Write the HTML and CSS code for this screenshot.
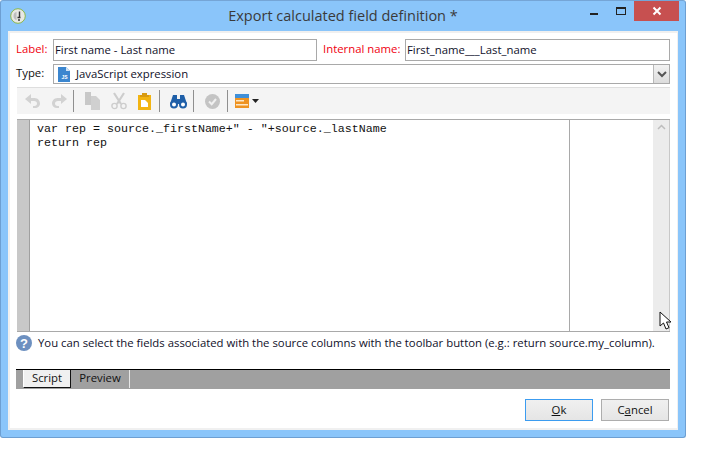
FILE: index.html
```html
<!DOCTYPE html>
<html lang="en">
<head>
<meta charset="utf-8">
<title>Export calculated field definition *</title>
<link rel="stylesheet" href="styles.css">
</head>
<body>
<div class="window">
  <header class="titlebar">
    <svg class="app-icon" width="16" height="16" viewBox="0 0 16 16"><circle cx="8" cy="8" r="7.300" fill="#e8e8e4" stroke="#8cb84a"/><path d="M3.500 8a4.500 4.500 0 0 1 3-4.200v8.400a4.500 4.500 0 0 1-3-4.200z" fill="#bdbdbd"/><path d="M9.500 3.500v5.500M7.500 9.500h3M9 11v2" stroke="#333" stroke-width="1.400" fill="none"/></svg>
    <div class="title">Export calculated field definition *</div>
    <div class="controls">
      <span class="ctl-min"></span>
      <span class="ctl-max"></span>
      <span class="ctl-close"><svg width="10" height="10" viewBox="0 0 10 10"><path d="M1.500 1.500l7 7M8.500 1.500l-7 7" stroke="#fff" stroke-width="2"/></svg></span>
    </div>
  </header>
  <main class="client">
    <div class="row row-top">
      <label class="lbl lbl-req lbl-first">Label:</label>
      <div class="field field-label">First name - Last name</div>
      <label class="lbl lbl-req lbl-internal">Internal name:</label>
      <div class="field field-internal">First_name___Last_name</div>
    </div>
    <div class="row row-type">
      <label class="lbl lbl-first">Type:</label>
      <div class="field field-type">
        <svg class="js-icon" width="12" height="15" viewBox="0 0 12 15"><path d="M0 0h8l4 4v11H0z" fill="#3b86cf"/><path d="M8 0l4 4H8z" fill="#cfe3f6"/><text x="3.400" y="12.400" class="js-text">JS</text></svg>
        <span class="type-text">JavaScript expression</span>
        <span class="combo-btn"><svg width="10" height="7" viewBox="0 0 10 7"><path d="M1 1l4 4 4-4" stroke="#555" stroke-width="2" fill="none"/></svg></span>
      </div>
    </div>
    <div class="toolbar">
      <svg class="tool" width="18" height="16" viewBox="0 0 18 16"><path d="M7 1L1 6l6 5V8h3c2 0 3 1 3 2.500S12 13 10.500 13H9v2h2c3 0 5-2 5-4.500S14 5 10.500 5H7z" fill="#d2d2d2"/></svg>
      <svg class="tool tool-redo" width="18" height="16" viewBox="0 0 18 16"><path d="M11 1l6 5-6 5V8H8c-2 0-3 1-3 2.500S6 13 7.500 13H9v2H7c-3 0-5-2-5-4.500S4 5 7.500 5H11z" fill="#d2d2d2"/></svg>
      <span class="sep sep-a"></span>
      <svg class="tool tool-copy" width="16" height="18" viewBox="0 0 16 18"><path d="M0 0h6v13H0z" fill="#c8c8c8"/><path d="M6 4h5l4 4v10H6z" fill="#d0d0d0"/></svg>
      <svg class="tool tool-cut" width="16" height="18" viewBox="0 0 16 18"><path d="M3 1l7 11M13 1L6 12" stroke="#cdcdcd" stroke-width="2.200" fill="none"/><circle cx="3.500" cy="14" r="2.600" fill="none" stroke="#cdcdcd" stroke-width="1.400"/><circle cx="12.500" cy="14" r="2.600" fill="none" stroke="#cdcdcd" stroke-width="1.400"/></svg>
      <svg class="tool tool-paste" width="13" height="18" viewBox="0 0 13 18"><path d="M0 3h13v15H0z" fill="#f2b412"/><path d="M4 3V1h5v2h2v2H2V3z" fill="#d89a10"/><path d="M3 8h4l3 3v4H3z" fill="#fff"/></svg>
      <span class="sep sep-b"></span>
      <svg class="tool tool-find" width="17" height="15" viewBox="0 0 17 15"><path d="M3 1h4v4h3V1h4l3 9H0z" fill="#1f5fa8"/><circle cx="4" cy="10.500" r="3" fill="#fff" stroke="#1f5fa8" stroke-width="2"/><circle cx="13" cy="10.500" r="3" fill="#fff" stroke="#1f5fa8" stroke-width="2"/></svg>
      <span class="sep sep-c"></span>
      <svg class="tool tool-check" width="15" height="15" viewBox="0 0 15 15"><circle cx="7.500" cy="7.500" r="7.500" fill="#c4c4c4"/><path d="M4 7.500l2.700 2.700L11 5" stroke="#f0f0f0" stroke-width="2" fill="none"/></svg>
      <span class="sep sep-d"></span>
      <svg class="tool tool-fields" width="14" height="14" viewBox="0 0 14 14"><path d="M0 0h14v14H0z" fill="#ee9322"/><path d="M0 0h14v4H0z" fill="#3f8fd8"/><path d="M1 6h8v1.500H1zM1 10h12v1.500H1z" fill="#fde8c8"/></svg>
      <svg class="tool-arrow" width="7" height="4" viewBox="0 0 7 4"><path d="M0 0h7L3.500 4z" fill="#222"/></svg>
    </div>
    <div class="editor">
      <div class="gutter"></div>
      <pre class="code">var rep = source._firstName+" - "+source._lastName
return rep</pre>
      <div class="side"></div>
      <div class="scroll"><svg width="9" height="6" viewBox="0 0 9 6"><path d="M1 5l3.500-3.500L8 5" stroke="#bdbdbd" stroke-width="1.500" fill="none"/></svg></div>
    </div>
    <div class="help">
      <svg width="16" height="16" viewBox="0 0 16 16"><circle cx="8" cy="8" r="8" fill="#6d90c0"/><text x="8" y="12.500" class="help-q">?</text></svg>
      <span class="help-text">You can select the fields associated with the source columns with the toolbar button (e.g.: return source.my_column).</span>
    </div>
    <div class="tabs">
      <span class="tab tab-on">Script</span>
      <span class="tab tab-off">Preview</span>
    </div>
    <div class="buttons">
      <button class="btn btn-default"><u>O</u>k</button>
      <button class="btn">C<u>a</u>ncel</button>
    </div>
  </main>
</div>
<svg class="cursor" width="14" height="20" viewBox="0 0 14 20"><path d="M1 1v14l3.500-3 2.500 6 3-1.300L7.500 11H12z" fill="#fff" stroke="#111" stroke-width="1"/></svg>
</body>
</html>
```
FILE: styles.css
```css
* { box-sizing: border-box; }
html, body { margin: 0; padding: 0; background: #fff; }
body {
  width: 704px; height: 476px; position: relative; overflow: hidden;
  font-family: "Open Sans", "Noto Sans", sans-serif; font-size: 11.350px; color: #111;
}
.window {
  width: 686px; height: 438px; background: #8ac5fa;
  border: 1px solid #6d9fd2; border-top-color: #75a5d6; border-radius: 3px;
  display: flex; flex-direction: column; padding: 0 7px 7px;
}
.titlebar { height: 30px; display: flex; align-items: flex-start; position: relative; flex: none; }
.app-icon { position: absolute; left: 2px; top: 7px; }
.title { width: 100%; text-align: center; font-size: 14.500px; line-height: 20px; padding-top: 5px; color: #3a3a3a; }
.controls { position: absolute; right: -1px; top: 0; display: flex; align-items: flex-start; }
.ctl-min { width: 8px; height: 2px; background: #222; margin-top: 12px; margin-right: 18px; }
.ctl-max { width: 10px; height: 8px; border: 1px solid #222; border-top-width: 2px; margin-top: 6px; margin-right: 8px; }
.ctl-close { width: 45px; height: 20px; background: #c75050; display: flex; align-items: center; justify-content: center; }
.client {
  flex: 1; background: #fff; border: 1px solid #f0f0f0; border-width: 2px 1px 2px 2px;
  padding: 6px 7px 0 7px; display: flex; flex-direction: column;
}
.row { display: flex; align-items: center; flex: none; }
.row-top { height: 22px; }
.row-type { height: 20px; margin-top: 3px; }
.lbl { line-height: 16px; padding-bottom: 2px; }
.lbl-first { width: 37px; margin-left: -1px; flex: none; }
.lbl-req { color: #f00010; }
.lbl-internal { margin-left: 6px; width: 82px; flex: none; }
.field { border: 1px solid #a9a9a9; height: 100%; background: #fff; display: flex; align-items: center; padding: 0 0 2px 1px; color: #10102a; }
.field-label { width: 264px; }
.field-internal { width: 265px; }
.field-type { flex: 1; position: relative; padding: 0 0 0 4px; }
.js-icon { margin-right: 6px; }
.js-text { font-size: 5px; fill: #fff; font-family: "Liberation Sans", sans-serif; font-weight: 700; }
.help-q { font-size: 13px; fill: #fff; font-family: "Liberation Sans", sans-serif; font-weight: 700; text-anchor: middle; }
.type-text { flex: 1; padding-bottom: 2px; }
.combo-btn { width: 16px; height: 18px; background: linear-gradient(#f2f2f2, #dcdcdc); border-left: 1px solid #b8b8b8; display: flex; align-items: center; justify-content: center; }
.toolbar { height: 27px; margin-top: 3px; background: #f4f4f4; border-top: 1px solid #dedede; display: flex; align-items: center; padding-left: 7px; flex: none; }
.tool { flex: none; }
.tool-redo { margin-left: 8px; }
.sep { width: 1px; height: 22px; background: #8f8f8f; flex: none; }
.sep-a { margin-left: 5px; }
.tool-copy { margin-left: 11px; }
.tool-cut { margin-left: 10px; }
.tool-paste { margin-left: 11px; }
.sep-b { margin-left: 8px; }
.tool-find { margin-left: 10px; }
.sep-c { margin-left: 6px; }
.tool-check { margin-left: 11px; }
.sep-d { margin-left: 7px; }
.tool-fields { margin-left: 7px; }
.tool-arrow { margin-left: 3px; }
.editor { height: 213px; margin-top: 5px; border-top: 1px solid #a9a9a9; border-bottom: 1px solid #a9a9a9; display: flex; flex: none; }
.gutter { width: 13px; background: #c8c8c8; flex: none; border-right: 1px solid #a0a0a0; }
.code { margin: 0; padding: 2px 0 0 7px; flex: 1; font-family: "Liberation Mono", monospace; font-size: 11.670px; line-height: 14px; color: #111; }
.side { width: 84px; border-left: 1px solid #a9a9a9; flex: none; }
.scroll { width: 17px; background: #ececec; flex: none; display: flex; justify-content: center; padding-top: 4px; border-right: 1px solid #c8c8c8; }
.help { display: flex; align-items: center; height: 16px; margin-top: 3px; margin-left: -1px; gap: 6px; color: #10102a; flex: none; }
.help-text { white-space: nowrap; padding-bottom: 2px; }
.tabs { height: 20px; margin-top: 18px; margin-left: -1px; background: #a0a0a0; border-top: 1px solid #000; display: flex; padding-left: 7px; flex: none; }
.tab { height: 18px; line-height: 15px; }
.tab-on { width: 48px; background: #f0f0f0; border-left: 1px solid #fff; border-right: 1px solid #111; border-bottom: 1px solid #111; text-align: center; }
.tab-off { width: 59px; border-right: 1px solid #e6e6e6; text-align: center; }
.buttons { display: flex; justify-content: flex-end; gap: 8px; margin-top: 10px; padding-right: 1px; flex: none; }
.btn { width: 68px; height: 22px; padding: 0 0 2px; font: inherit; color: #111; border: 1px solid #adadad; background: linear-gradient(#f0f0f0, #e5e5e5); border-radius: 0; }
.btn-default { border-color: #3c9cf0; }
.cursor { position: absolute; left: 659px; top: 311px; }
```
